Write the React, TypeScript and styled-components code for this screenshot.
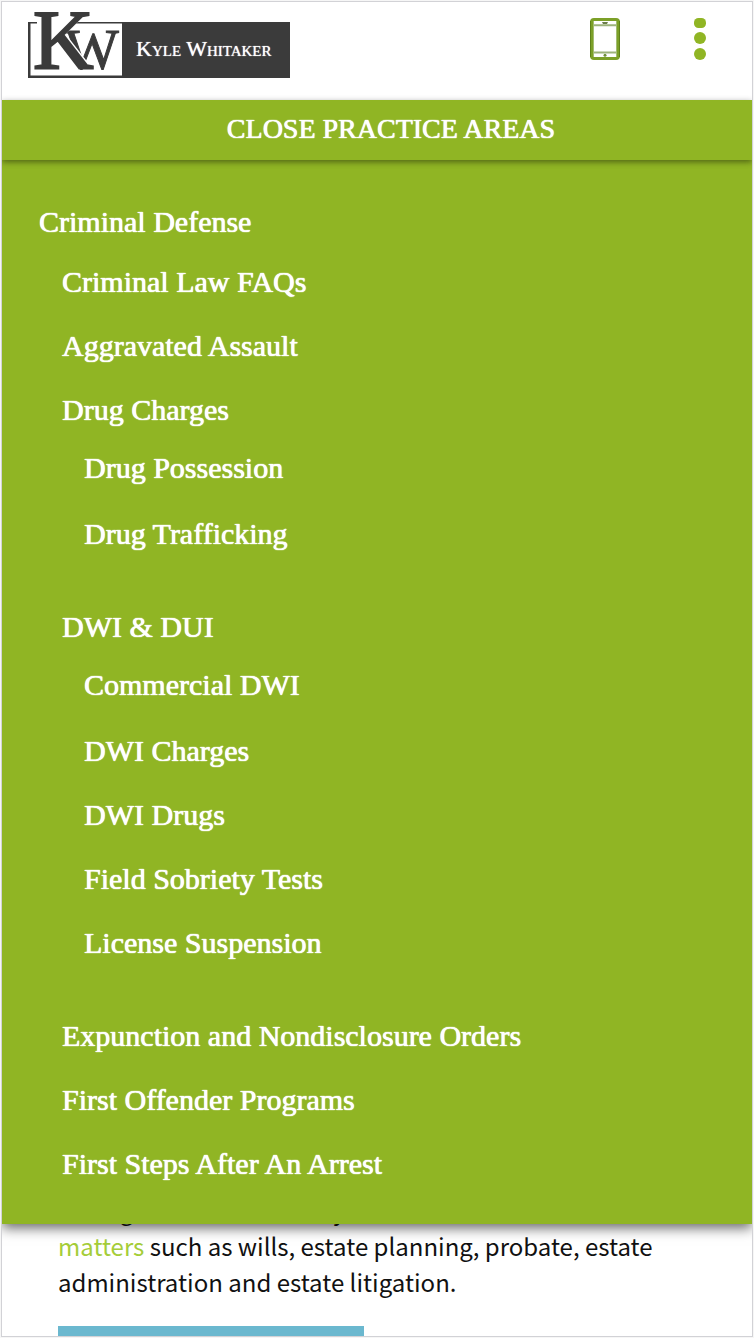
import React from "react";
import styled, { createGlobalStyle } from "styled-components";

const GREEN = "#90b524";
const INK = "#3b3b3b";
const SERIF = '"Liberation Serif", "Times New Roman", serif';

const GlobalStyle = createGlobalStyle`
  *, *::before, *::after { box-sizing: border-box; }
  body { margin: 0; background: #f6f6f6; }
`;

const Page = styled.div`
  min-height: 100vh;
  padding: 1px;
`;

const Frame = styled.div`
  overflow: hidden;
  border: 1px solid #d2d2d6;
  background: #fff;
`;

const Header = styled.header`
  display: flex;
  align-items: flex-start;
  justify-content: space-between;
  height: 98px;
  padding: 8px 46px 0 26px;
`;

const LogoLink = styled.a`
  display: flex;
  align-items: flex-end;
  height: 68px;
  text-decoration: none;
`;

const Monogram = styled.svg`
  display: block;
  flex: none;
  overflow: visible;
`;

const LogoName = styled.span`
  display: flex;
  align-items: center;
  width: 168px;
  height: 56px;
  padding: 0 0 2px 14px;
  background: ${INK};
  color: #fff;
  font-family: ${SERIF};
  font-size: 22px;
  font-variant: small-caps;
  line-height: 24px;
  white-space: nowrap;
  text-shadow: 0 0 1px #fff;
`;

const Actions = styled.div`
  display: flex;
  gap: 74px;
  padding-top: 8px;
`;

const IconButton = styled.button`
  display: block;
  padding: 0;
  border: 0;
  background: none;
  cursor: pointer;

  svg { display: block; }
`;

const ToggleBar = styled.button`
  position: relative;
  z-index: 2;
  display: block;
  width: 100%;
  height: 60px;
  padding: 0 0 2px 28px;
  border: 0;
  background: ${GREEN};
  box-shadow: 0 2px 6px rgba(0, 0, 0, 0.45);
  color: #fff;
  font-family: ${SERIF};
  font-size: 28px;
  line-height: 32px;
  text-align: center;
  text-transform: uppercase;
  text-shadow: 0 0 1px #fff, 0 0 1px #fff;
  cursor: pointer;
`;

const MenuPanel = styled.nav`
  position: relative;
  z-index: 1;
  padding: 44px 37px 42px;
  background: ${GREEN};
  box-shadow: 0 4px 12px rgba(0, 0, 0, 0.6);
`;

const MenuList = styled.ul<{ $level: 1 | 2 | 3 }>`
  display: flex;
  flex-direction: column;
  gap: 28px;
  margin: 0;
  padding: 0;
  list-style: none;

  ${({ $level }) => $level === 2 && "padding: 24px 0 0 23px;"}
  ${({ $level }) =>
    $level === 3 &&
    `
    padding: 22px 0 29px 22px;
    > li:first-child { margin-bottom: 2px; }
  `}
`;

const MenuLink = styled.a`
  display: block;
  color: #fff;
  font-family: ${SERIF};
  font-size: 30px;
  line-height: 36px;
  text-decoration: none;
  text-shadow: 0 0 1px #fff, 0 0 1px #fff;
`;

const Article = styled.main`
  margin-top: -32px;
  padding: 0 56px;
`;

const Paragraph = styled.p`
  margin: 0;
  color: #111;
  font-family: "Noto Sans CJK SC", "Noto Sans", sans-serif;
  font-size: 24px;
  line-height: 36px;
`;

const TextLink = styled.a`
  color: #a5cd39;
  text-decoration: none;
`;

const Banner = styled.div`
  width: 48%;
  height: 10px;
  margin-top: 26px;
  background: #6bb8cf;
`;

type Item = { label: string; children?: Item[] };

const practiceAreas: Item[] = [
  {
    label: "Criminal Defense",
    children: [
      { label: "Criminal Law FAQs" },
      { label: "Aggravated Assault" },
      {
        label: "Drug Charges",
        children: [{ label: "Drug Possession" }, { label: "Drug Trafficking" }],
      },
      {
        label: "DWI & DUI",
        children: [
          { label: "Commercial DWI" },
          { label: "DWI Charges" },
          { label: "DWI Drugs" },
          { label: "Field Sobriety Tests" },
          { label: "License Suspension" },
        ],
      },
      { label: "Expunction and Nondisclosure Orders" },
      { label: "First Offender Programs" },
      { label: "First Steps After An Arrest" },
    ],
  },
];

function Menu({ items, level = 1 }: { items: Item[]; level?: 1 | 2 | 3 }) {
  return (
    <MenuList $level={level}>
      {items.map((item) => (
        <li key={item.label}>
          <MenuLink href="#">{item.label}</MenuLink>
          {item.children && (
            <Menu items={item.children} level={(level + 1) as 2 | 3} />
          )}
        </li>
      ))}
    </MenuList>
  );
}

function Logo() {
  return (
    <LogoLink href="#" aria-label="Kyle Whitaker">
      <Monogram width="94" height="68" viewBox="0 0 94 68" fill={INK}>
        <path d="M0 12H9V13.500H2.500V65.500H94V68H0Z" />
        <path d="M43 12H94V13.500H42Z" />
        <g
          fontFamily="Liberation Serif, Times New Roman, serif"
          stroke={INK}
        >
          <text x="37" y="59" fontSize="57" strokeWidth="1">
            W
          </text>
          <text
            x="5"
            y="59"
            fontSize="84"
            strokeWidth="2"
            style={{ filter: "drop-shadow(1px -1px 0 #fff)" }}
          >
            K
          </text>
        </g>
      </Monogram>
      <LogoName>Kyle Whitaker</LogoName>
    </LogoLink>
  );
}

export default function App() {
  return (
    <>
      <GlobalStyle />
      <Page>
        <Frame>
          <Header>
            <Logo />
            <Actions>
              <IconButton type="button" aria-label="Call">
                <svg width="30" height="42" viewBox="0 0 30 42">
                  <rect x="1.500" y="1.500" width="27" height="39" rx="2.500" fill="#fff" stroke="#7ca028" strokeWidth="3" />
                  <path d="M.5 3V39M29.500 3V39" stroke="#5f821a" strokeWidth="1" />
                  <path d="M3 7.300H27M3 34.500H27" stroke="#9db37c" strokeWidth="2" />
                  <path d="M3.500 3V39M26.500 3V39" stroke="#a3bd72" strokeWidth="1" />
                  <path d="M12 4H18L17 6H13Z" fill="#6b7f4a" />
                  <circle cx="15" cy="37.300" r="1.500" fill="#6f8f3a" />
                </svg>
              </IconButton>
              <IconButton type="button" aria-label="Menu">
                <svg width="12" height="42" viewBox="0 0 12 42" fill={GREEN}>
                  <rect y="0" width="12" height="10" rx="4.500" />
                  <circle cx="6" cy="20" r="6" />
                  <circle cx="6" cy="36" r="6" />
                </svg>
              </IconButton>
            </Actions>
          </Header>
          <ToggleBar type="button">Close Practice Areas</ToggleBar>
          <MenuPanel aria-label="Practice areas">
            <Menu items={practiceAreas} />
          </MenuPanel>
          <Article>
            <Paragraph>
              having clients in all family and estate
              <br />
              <TextLink href="#">matters</TextLink> such as wills, estate
              planning, probate, estate administration and estate litigation.
            </Paragraph>
            <Banner />
          </Article>
        </Frame>
      </Page>
    </>
  );
}
